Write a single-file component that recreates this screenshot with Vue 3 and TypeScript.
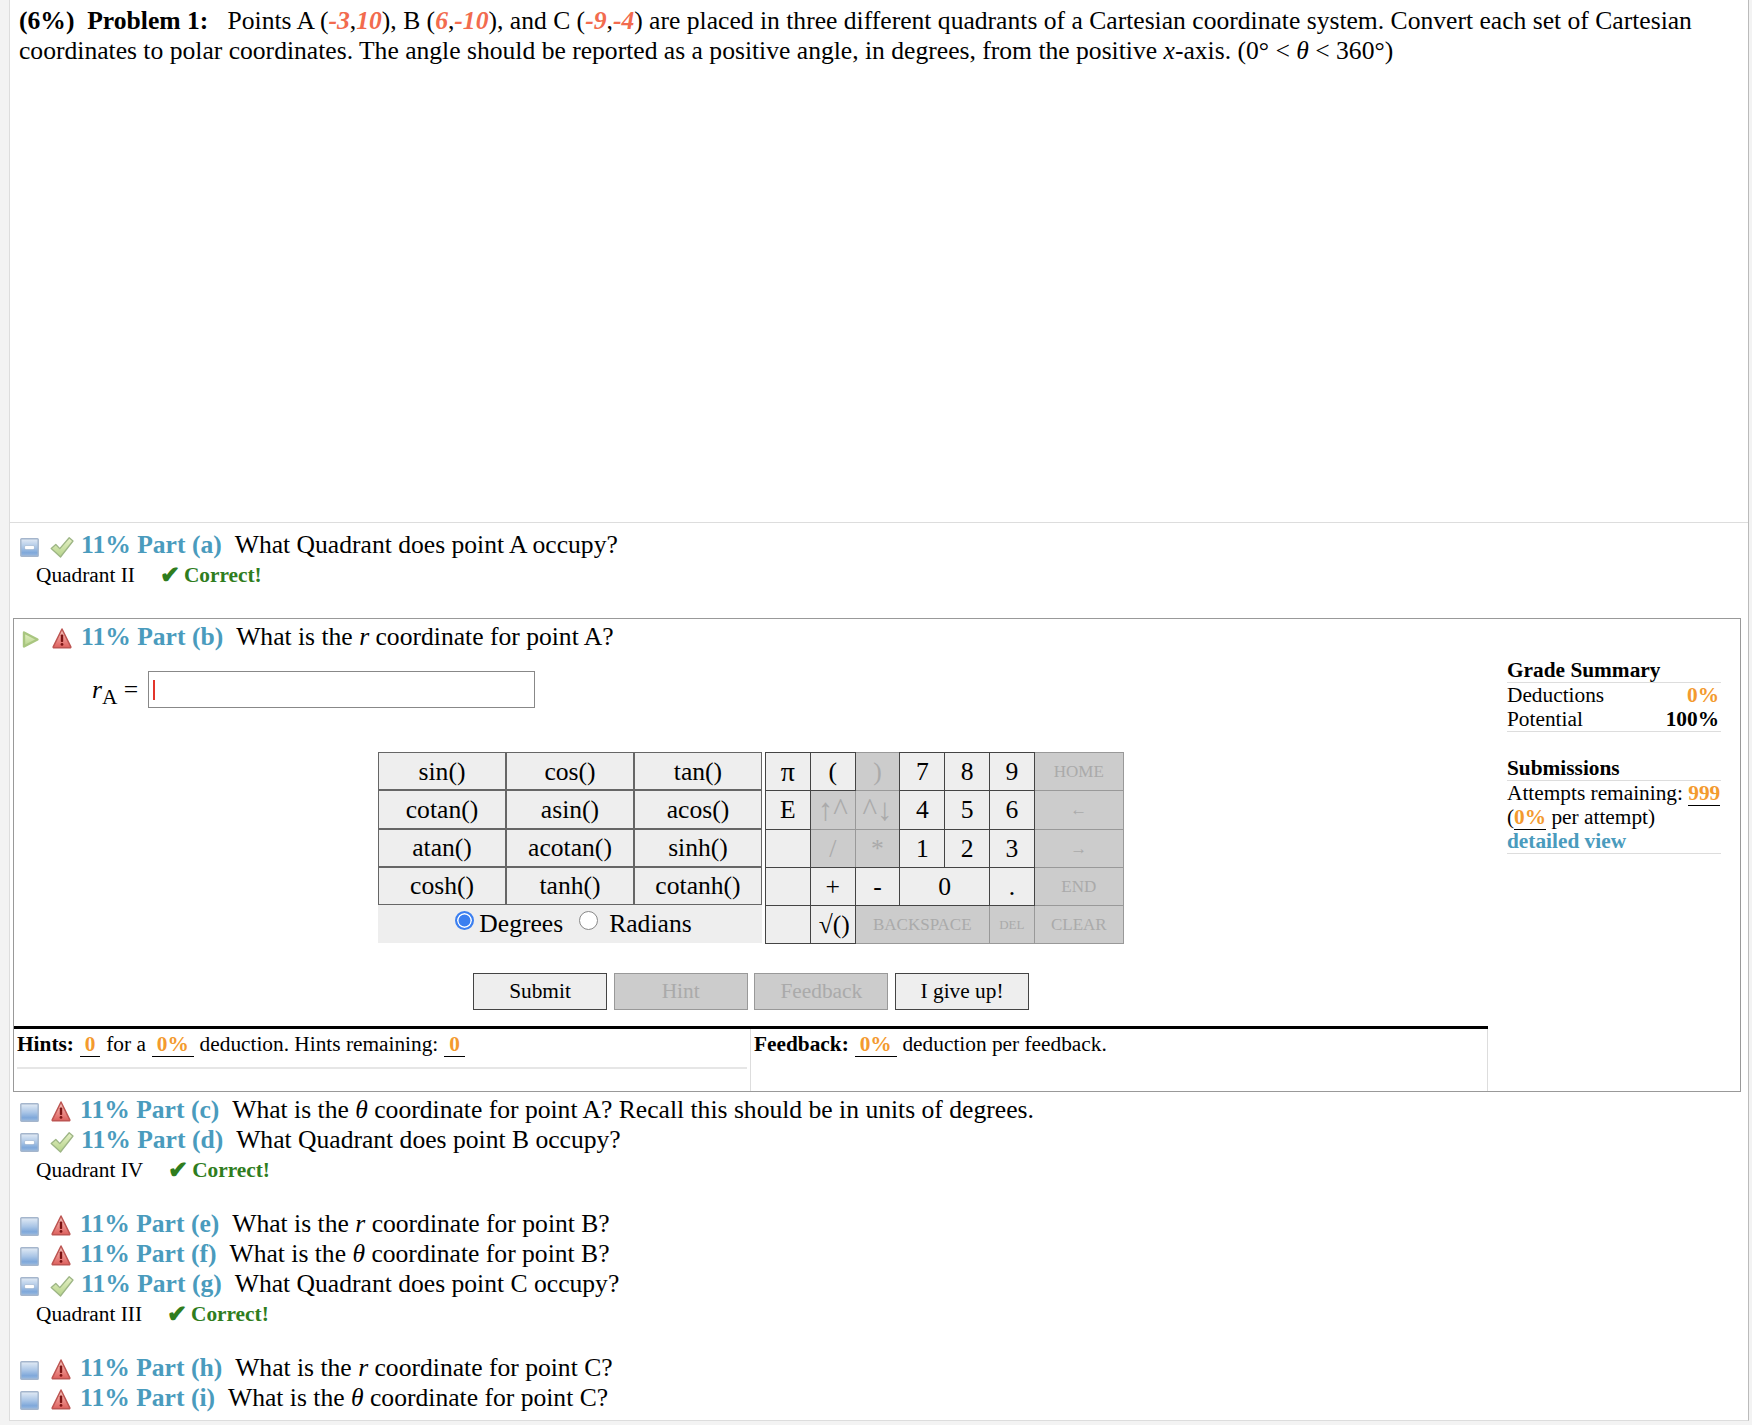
<script setup lang="ts">
interface Part {
  label: string
  state: 'ok' | 'warn'
  before: string
  sym?: string
  after: string
  answer?: string
}

const partA: Part = { label: '(a)', state: 'ok', before: 'What Quadrant does point A occupy?', after: '', answer: 'Quadrant II' }
const partsAfter: Part[] = [
  { label: '(c)', state: 'warn', before: 'What is the ', sym: 'θ', after: ' coordinate for point A? Recall this should be in units of degrees.' },
  { label: '(d)', state: 'ok', before: 'What Quadrant does point B occupy?', after: '', answer: 'Quadrant IV' },
  { label: '(e)', state: 'warn', before: 'What is the ', sym: 'r', after: ' coordinate for point B?' },
  { label: '(f)', state: 'warn', before: 'What is the ', sym: 'θ', after: ' coordinate for point B?' },
  { label: '(g)', state: 'ok', before: 'What Quadrant does point C occupy?', after: '', answer: 'Quadrant III' },
  { label: '(h)', state: 'warn', before: 'What is the ', sym: 'r', after: ' coordinate for point C?' },
  { label: '(i)', state: 'warn', before: 'What is the ', sym: 'θ', after: ' coordinate for point C?' },
]

const funcs = ['sin()', 'cos()', 'tan()', 'cotan()', 'asin()', 'acos()', 'atan()', 'acotan()', 'sinh()', 'cosh()', 'tanh()', 'cotanh()']

interface Key { t: string; off?: boolean; span?: number; cls?: string }
const keys: Key[] = [
  { t: 'π', cls: 'pi' }, { t: '(' }, { t: ')', off: true }, { t: '7' }, { t: '8' }, { t: '9' }, { t: 'HOME', off: true, cls: 'small' },
  { t: 'E' }, { t: '↑^', off: true, cls: 'arrow' }, { t: '^↓', off: true, cls: 'arrow' }, { t: '4' }, { t: '5' }, { t: '6' }, { t: '←', off: true, cls: 'small' },
  { t: '' }, { t: '/', off: true }, { t: '*', off: true }, { t: '1' }, { t: '2' }, { t: '3' }, { t: '→', off: true, cls: 'small' },
  { t: '' }, { t: '+' }, { t: '-' }, { t: '0', span: 2 }, { t: '.' }, { t: 'END', off: true, cls: 'small' },
  { t: '' }, { t: '√()', cls: 'sqrt' }, { t: 'BACKSPACE', off: true, span: 3, cls: 'small' }, { t: 'DEL', off: true, cls: 'tiny' }, { t: 'CLEAR', off: true, cls: 'small' },
]
</script>

<template>
  <div class="page">
    <svg class="defs" width="0" height="0" aria-hidden="true">
      <defs>
        <linearGradient id="gBlue" x1="0" y1="0" x2="0" y2="1">
          <stop offset="0" stop-color="#e3ebf5" />
          <stop offset="0.5" stop-color="#a9c5e6" />
          <stop offset="0.8" stop-color="#7fa8da" />
          <stop offset="1" stop-color="#9dbbe0" />
        </linearGradient>
        <linearGradient id="gRed" x1="0" y1="0" x2="0" y2="1">
          <stop offset="0" stop-color="#f6c8c0" />
          <stop offset="0.6" stop-color="#ea8884" />
          <stop offset="1" stop-color="#dc5f5c" />
        </linearGradient>
        <linearGradient id="gGreen" x1="0" y1="0" x2="0" y2="1">
          <stop offset="0" stop-color="#e6f1c6" />
          <stop offset="1" stop-color="#b5d38a" />
        </linearGradient>
        <symbol id="iBox" viewBox="0 0 19 19">
          <rect x="0.8" y="0.8" width="17.4" height="17.4" rx="0.8" fill="url(#gBlue)" stroke="#a4b5cc" stroke-width="1.4" />
        </symbol>
        <symbol id="iMinus" viewBox="0 0 19 19">
          <rect x="0.8" y="0.8" width="17.4" height="17.4" rx="0.8" fill="url(#gBlue)" stroke="#a4b5cc" stroke-width="1.4" />
          <rect x="4.5" y="7.5" width="10" height="4" rx="1.4" fill="#fff" stroke="#8fa6c4" stroke-width="0.5" />
        </symbol>
        <symbol id="iPlay" viewBox="0 0 19 19">
          <path d="M3 2.5 L16.5 9.5 L3 16.5 Z" fill="url(#gGreen)" stroke="#a9c680" stroke-width="2.4" stroke-linejoin="round" />
        </symbol>
        <symbol id="iCheck" viewBox="0 0 24 22">
          <path d="M1.2 12.5 L5.8 8.5 L9.8 12.6 L19.2 1.8 L23 5 L10.5 21 Z" fill="url(#gGreen)" stroke="#9db585" stroke-width="1.3" stroke-linejoin="round" />
        </symbol>
        <symbol id="iWarn" viewBox="0 0 20 22">
          <path d="M10 2 L18.8 19.8 Q19 20.8 18 20.8 L2 20.8 Q1 20.8 1.2 19.8 Z" fill="url(#gRed)" stroke="#bd5552" stroke-width="1.5" stroke-linejoin="round" />
          <rect x="8.8" y="7.5" width="2.4" height="7.5" rx="0.8" fill="#7c1414" />
          <circle cx="10" cy="17.4" r="1.4" fill="#7c1414" />
        </symbol>
      </defs>
    </svg>

    <section class="problem">
      <b>(6%)&nbsp; Problem 1:</b>&nbsp;&nbsp; Points A (<i class="rnd">-3</i>,<i class="rnd">10</i>), B (<i class="rnd">6</i>,<i class="rnd">-10</i>), and C (<i class="rnd">-9</i>,<i class="rnd">-4</i>) are placed in three different quadrants of a Cartesian coordinate system. Convert each set of Cartesian coordinates to polar coordinates. The angle should be reported as a positive angle, in degrees, from the positive <i>x</i>-axis. (0° &lt; <i>θ</i> &lt; 360°)
    </section>

    <section class="partlist first">
      <div class="part-row">
        <svg class="ic-box"><use href="#iMinus" /></svg>
        <svg class="ic-check"><use href="#iCheck" /></svg>
        <span class="tag">11% Part {{ partA.label }}</span>
        <span class="q">{{ partA.before }}</span>
      </div>
      <div class="answer"><span class="ans">{{ partA.answer }}</span><span class="mark">✔</span><span class="correct">Correct!</span></div>
    </section>

    <section class="box">
      <div class="box-top">
        <div class="work">
          <div class="part-row open">
            <svg class="ic-box"><use href="#iPlay" /></svg>
            <svg class="ic-warn"><use href="#iWarn" /></svg>
            <span class="tag">11% Part (b)</span>
            <span class="q">What is the <i>r</i> coordinate for point A?</span>
          </div>

          <div class="entry">
            <span class="entry-label"><i>r</i><sub>A</sub> =</span>
            <div class="entry-input"><span class="caret"></span></div>
          </div>

          <div class="keypad">
            <div class="funcs">
              <div v-for="f in funcs" :key="f" class="fn">{{ f }}</div>
              <div class="mode">
                <span class="radio checked"></span><span class="mode-t">Degrees</span>
                <span class="radio"></span><span class="mode-t second">Radians</span>
              </div>
            </div>
            <div class="keys">
              <div
                v-for="(k, i) in keys"
                :key="i"
                class="key"
                :class="[{ off: k.off }, k.cls, k.span ? 'span' + k.span : '']"
              >{{ k.t }}</div>
            </div>
          </div>

          <div class="actions">
            <button class="btn" type="button">Submit</button>
            <button class="btn off" type="button">Hint</button>
            <button class="btn off" type="button">Feedback</button>
            <button class="btn" type="button">I give up!</button>
          </div>
        </div>

        <aside class="side">
          <h4>Grade Summary</h4>
          <div class="srow"><span>Deductions</span><b class="or">0%</b></div>
          <div class="srow last"><span>Potential</span><b>100%</b></div>
          <h4 class="sub">Submissions</h4>
          <div class="sline">Attempts remaining: <b class="or ul">999</b></div>
          <div class="sline">(<b class="or ul">0%</b> per attempt)</div>
          <div class="sline link">detailed view</div>
        </aside>
      </div>

      <div class="foot">
        <div class="hints">
          <div class="hints-line"><b>Hints:</b> <b class="or ul">0</b> for a <b class="or ul">0%</b> deduction. Hints remaining: <b class="or ul">0</b></div>
        </div>
        <div class="feedback"><b>Feedback:</b> <b class="or ul">0%</b> deduction per feedback.</div>
      </div>
    </section>

    <section class="partlist rest">
      <template v-for="p in partsAfter" :key="p.label">
        <div class="part-row">
          <svg class="ic-box"><use :href="p.state === 'ok' ? '#iMinus' : '#iBox'" /></svg>
          <svg v-if="p.state === 'ok'" class="ic-check"><use href="#iCheck" /></svg>
          <svg v-else class="ic-warn"><use href="#iWarn" /></svg>
          <span class="tag">11% Part {{ p.label }}</span>
          <span class="q">{{ p.before }}<i v-if="p.sym">{{ p.sym }}</i>{{ p.after }}</span>
        </div>
        <div v-if="p.answer" class="answer"><span class="ans">{{ p.answer }}</span><span class="mark">✔</span><span class="correct">Correct!</span></div>
      </template>
    </section>
  </div>
</template>

<style>
html, body { background: #f3f3f3; }
</style>

<style scoped>
.page {
  margin: 0 3px 0 9px;
  height: 1421px;
  background: #fff;
  border-left: 1px solid #ddd;
  border-right: 1px solid #bbb;
  border-bottom: 1px solid #ddd;
  box-sizing: border-box;
  font-family: "Liberation Serif", "Times New Roman", serif;
  color: #000;
  font-size: 25.6px;
  line-height: 30px;
}
.defs { display: block; }
.problem {
  height: 523px;
  box-sizing: border-box;
  padding: 6px 10px 0 9px;
  border-bottom: 1px solid #ddd;
}
.rnd { color: #f26b4e; font-weight: bold; }
.partlist { padding-left: 10px; }
.partlist.first { height: 95px; padding-top: 7px; box-sizing: border-box; }
.partlist.rest { padding-top: 3px; }
.part-row {
  display: flex;
  align-items: center;
  height: 30px;
  white-space: pre;
}
.ic-box { width: 19px; height: 19px; margin-top: 4px; flex: none; }
.ic-check { width: 24px; height: 22px; margin-left: 11px; margin-top: 4px; flex: none; }
.ic-warn { width: 20px; height: 22px; margin-left: 12px; margin-top: 2px; flex: none; }
.ic-warn + .tag { margin-left: 9px; }
.tag { color: #4a9bbd; font-weight: bold; margin-left: 7px; margin-right: 13px; }
.answer {
  padding-left: 16px;
  font-size: 21.33px;
  height: 30px;
  line-height: 30px;
  margin-bottom: 24px;
  white-space: pre;
  display: flex;
  align-items: center;
}
.ans { margin-right: 25px; }
.mark { color: #2f7d1e; font-size: 24px; font-weight: bold; margin-right: 4px; }
.correct { color: #2f7d1e; font-weight: bold; }

.box {
  margin-left: 3px;
  margin-right: 7px;
  height: 474px;
  box-sizing: border-box;
  border: 1px solid #999;
  display: flex;
  flex-direction: column;
}
.box-top { display: flex; height: 407px; }
.work { width: 1474px; flex: none; }
.part-row.open { padding-left: 7px; margin-top: 3px; }
.entry {
  display: flex;
  align-items: center;
  height: 37px;
  margin-top: 19px;
  padding-left: 78px;
}
.entry-label { width: 56px; white-space: pre; line-height: 30px; }
sub { font-size: 21.33px; line-height: 0; }
.entry-input {
  width: 387px;
  height: 37px;
  box-sizing: border-box;
  border: 1px solid #888;
  display: flex;
  align-items: center;
  padding-left: 4px;
}
.caret { width: 1.5px; height: 20px; background: #e3352b; }

.keypad {
  display: flex;
  gap: 3px;
  margin-top: 44px;
  margin-left: 364px;
}
.funcs {
  display: grid;
  grid-template-columns: repeat(3, 128px);
  grid-auto-rows: 38.25px;
  background: #eee;
}
.fn {
  background: #eee;
  border: 1px solid #666;
  box-sizing: border-box;
  padding-top: 1px;
  display: flex;
  align-items: center;
  justify-content: center;
}
.mode {
  grid-column: span 3;
  display: flex;
  align-items: center;
  justify-content: center;
  padding-left: 7px;
}
.mode-t { margin-left: 5px; }
.mode-t.second { margin-left: 11px; }
.radio {
  width: 19px;
  height: 19px;
  box-sizing: border-box;
  border-radius: 50%;
  border: 1px solid #888;
  background: #fff;
  margin-left: 16px;
  margin-top: -7px;
}
.radio.checked {
  margin-left: 0;
  border: 2px solid #3b7ff0;
  background: #3b7ff0;
  box-shadow: inset 0 0 0 1.5px #fff;
}
.keys {
  display: grid;
  grid-template-columns: repeat(6, 44.8px) 89px;
  grid-auto-rows: 38.25px;
}
.key {
  border: 1px solid #444;
  margin: 0 -1px -1px 0;
  padding-top: 1px;
  background: #eee;
  display: flex;
  align-items: center;
  justify-content: center;
  z-index: 1;
}
.key.off { background: #ccc; border-color: #999; color: #aaa; z-index: 0; }
.key.small { font-size: 17px; }
.key.tiny { font-size: 13px; }
.key.arrow { font-size: 31px; }
.key.pi { font-size: 28px; }
.key.sqrt { padding-left: 3px; }
.span2 { grid-column: span 2; }
.span3 { grid-column: span 3; }

.actions {
  display: flex;
  gap: 6.7px;
  margin-top: 30px;
  margin-left: 459px;
}
.btn {
  width: 134px;
  height: 37px;
  padding: 0;
  border: 1px solid #444;
  background: #eee;
  font: 21.33px "Liberation Serif", "Times New Roman", serif;
  color: #000;
}
.btn.off { border-color: #999; background: #ccc; color: #aaa; }

.side { width: 214px; margin-left: 19px; font-size: 21.33px; line-height: 24px; padding-top: 39px; }
.side h4 { margin: 0; font-size: 21.33px; font-weight: bold; border-bottom: 1px solid #ddd; height: 25px; box-sizing: border-box; }
.side h4.sub { margin-top: 24px; }
.srow { display: flex; justify-content: space-between; padding-right: 2px; }
.srow.last { border-bottom: 1px solid #ddd; }
.sline.link { color: #4a9bbd; font-weight: bold; border-bottom: 1px solid #ddd; }
.or { color: #f39a2e; font-weight: bold; }
.ul { border-bottom: 1px solid #000; }

.foot {
  display: flex;
  width: 1474px;
  flex: 1;
  border-top: 3px solid #000;
  font-size: 21.33px;
  line-height: 30px;
  white-space: pre;
}
.hints { width: 737px; flex: none; box-sizing: border-box; padding: 0 3px 0 3px; border-right: 1px solid #ddd; }
.hints-line { height: 38px; border-bottom: 2px solid #e6e6e6; }
.hints .ul, .feedback .ul { padding: 0 5px; margin: 0 0.5px; }
.feedback { padding-left: 3px; flex: 1; border-right: 1px solid #ddd; }
</style>
